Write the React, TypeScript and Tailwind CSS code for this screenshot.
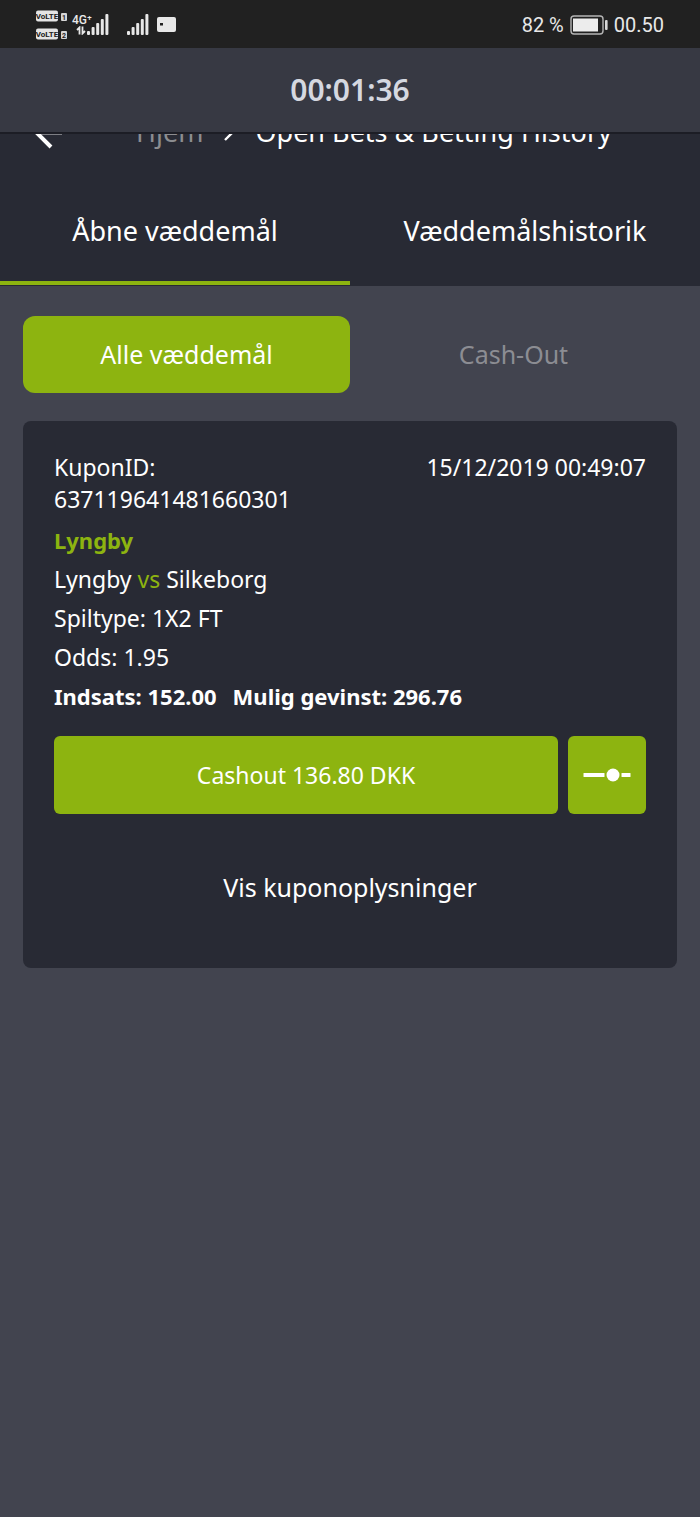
interface Bet {
  id: string;
  placedAt: string;
  selection: string;
  home: string;
  away: string;
  market: string;
  odds: number;
  stake: number;
  potentialWin: number;
  cashout: number;
}

const bets: Bet[] = [
  {
    id: "637119641481660301",
    placedAt: "15/12/2019 00:49:07",
    selection: "Lyngby",
    home: "Lyngby",
    away: "Silkeborg",
    market: "1X2 FT",
    odds: 1.95,
    stake: 152,
    potentialWin: 296.76,
    cashout: 136.8,
  },
];

function VolteBadge({ sim }: { sim: number }) {
  return (
    <svg width="32" height="12" viewBox="0 0 32 12" aria-hidden="true">
      <rect x="0" y="0.5" width="22" height="11" rx="2" fill="#e4e4e4" />
      <text
        x="11"
        y="9.2"
        textAnchor="middle"
        fontSize="8"
        fontWeight="700"
        fontFamily="Roboto, sans-serif"
        fill="#212121"
      >
        VoLTE
      </text>
      <rect x="25" y="3" width="6" height="8" rx="1" fill="#d6d6d6" />
      <text
        x="28"
        y="9.6"
        textAnchor="middle"
        fontSize="7"
        fontWeight="700"
        fontFamily="Roboto, sans-serif"
        fill="#212121"
      >
        {sim}
      </text>
    </svg>
  );
}

function SignalBars() {
  return (
    <svg width="22" height="21" viewBox="0 0 22 21" fill="#e8e8e8" aria-hidden="true">
      <rect x="0" y="17" width="3" height="4" rx="1" />
      <rect x="4.6" y="13" width="3" height="8" rx="1" />
      <rect x="9.2" y="9" width="3" height="12" rx="1" />
      <rect x="13.8" y="5" width="3" height="16" rx="1" />
      <rect x="18.4" y="0" width="3" height="21" rx="1" />
    </svg>
  );
}

function StatusBar() {
  return (
    <div className="flex h-12 items-center justify-between bg-[#212121] px-9 pt-px font-[Roboto,sans-serif] text-[#e8e8e8]">
      <div className="flex items-center">
        <div className="flex flex-col gap-[6px]">
          <VolteBadge sim={1} />
          <VolteBadge sim={2} />
        </div>
        <div className="ml-1 flex w-[18px] flex-col">
          <span className="text-[12px] leading-3 font-medium whitespace-nowrap">4G⁺</span>
          <svg width="10" height="9" viewBox="0 0 10 9" className="ml-1" aria-hidden="true">
            <path
              d="M3.5 8.5V1.5L1 4M6.5 0.5v7L9 5"
              fill="none"
              stroke="#e8e8e8"
              strokeWidth="1.8"
            />
          </svg>
        </div>
        <div className="-ml-[3px]">
          <SignalBars />
        </div>
        <div className="ml-[18px]">
          <SignalBars />
        </div>
        <svg width="19" height="15" viewBox="0 0 19 15" className="ml-2" aria-hidden="true">
          <rect width="19" height="15" rx="2" fill="#e8e8e8" />
          <rect x="3" y="6" width="3" height="2.5" fill="#212121" />
        </svg>
      </div>
      <div className="flex items-center gap-[6px] text-[20px] leading-6">
        <span>82 %</span>
        <svg width="38" height="20" viewBox="0 0 38 20" aria-hidden="true">
          <rect
            x="1"
            y="1"
            width="32"
            height="18"
            rx="3"
            fill="none"
            stroke="#b5b5b5"
            strokeWidth="1.4"
          />
          <rect x="3" y="3.5" width="25" height="13" fill="#ececec" />
          <rect x="35" y="5" width="2.6" height="10" rx="1" fill="#d8d8d8" />
        </svg>
        <span>00.50</span>
      </div>
    </div>
  );
}

// The row is scrolled half way under the timer bar
function Breadcrumb() {
  return (
    <nav className="flex h-[43px] items-end overflow-hidden" aria-label="Breadcrumb">
      <div className="flex h-[90px] w-full shrink-0 items-center pl-[34px] text-[27px]">
        <a href="#back" aria-label="Tilbage">
          <svg width="30" height="34" viewBox="0 0 30 34" fill="none" stroke="#fff">
            <path d="M17 2.5 2.500 17.500 17 32" strokeWidth="4" />
            <path d="M3 18h25" strokeWidth="2.8" />
          </svg>
        </a>
        <a href="#hjem" className="ml-[72px] text-[#8c8d90]">
          Hjem
        </a>
        <svg width="12" height="18" viewBox="0 0 12 18" className="ml-5" aria-hidden="true">
          <path d="m2 1 8 8-8 8" fill="none" stroke="#fff" strokeWidth="2.4" />
        </svg>
        <span className="ml-5 whitespace-nowrap">Open Bets &amp; Betting History</span>
      </div>
    </nav>
  );
}

function BetCard({ bet }: { bet: Bet }) {
  return (
    <article className="mt-7 rounded-lg bg-[#282a34] px-[31px] pt-[30px] pb-[42px]">
      <div className="flex justify-between gap-4 leading-8">
        <p className="min-w-0 flex-1">
          KuponID:
          <br />
          {bet.id}
        </p>
        <time className="shrink-0">{bet.placedAt}</time>
      </div>
      <div className="mt-[6px] leading-[39px]">
        <p className="text-[22px] font-bold text-[#8db410]">{bet.selection}</p>
        <p>
          {bet.home} <span className="text-[#8db410]">vs</span> {bet.away}
        </p>
        <p>Spiltype: {bet.market}</p>
        <p>Odds: {bet.odds}</p>
        <p className="flex flex-wrap gap-x-4 text-[22px] font-bold">
          <span>Indsats: {bet.stake.toFixed(2)}</span>
          <span>Mulig gevinst: {bet.potentialWin.toFixed(2)}</span>
        </p>
      </div>
      <div className="mt-5 flex gap-[10px]">
        <button type="button" className="h-[78px] flex-1 rounded-md bg-[#8db410]">
          Cashout {bet.cashout.toFixed(2)} DKK
        </button>
        <button
          type="button"
          aria-label="Delvis cashout"
          className="flex size-[78px] items-center justify-center rounded-md bg-[#8db410]"
        >
          <svg width="48" height="14" viewBox="0 0 48 14" fill="#fff" aria-hidden="true">
            <rect x="0.5" y="5" width="21" height="4" rx="0.5" />
            <circle cx="30" cy="7" r="6.5" />
            <rect x="38.5" y="5" width="9" height="4" rx="0.5" />
          </svg>
        </button>
      </div>
      <button type="button" className="mt-9 h-[76px] w-full text-[25px]">
        Vis kuponoplysninger
      </button>
    </article>
  );
}

export default function App() {
  return (
    <div className="min-h-screen bg-[#42444f] font-['Noto_Sans',sans-serif] text-[23px] text-white">
      <StatusBar />
      <header className="flex h-[86px] items-center justify-center border-b-2 border-[#1c1d25] bg-[#373943]">
        <span className="text-[30px] leading-8 font-semibold text-[#d5d8e0]">00:01:36</span>
      </header>

      <div className="bg-[#282a34] pb-px">
        <Breadcrumb />
        <div className="grid h-[108px] grid-cols-2 text-[27px]" role="tablist">
          <button
            type="button"
            role="tab"
            aria-selected="true"
            className="border-b-4 border-[#8db410] pt-1"
          >
            Åbne væddemål
          </button>
          <button
            type="button"
            role="tab"
            aria-selected="false"
            className="border-b-4 border-transparent pt-1"
          >
            Væddemålshistorik
          </button>
        </div>
      </div>

      <main className="px-[23px] pt-[30px] pb-8">
        <div className="grid grid-cols-2 text-[25px]">
          <button type="button" className="h-[77px] rounded-xl bg-[#8db410]">
            Alle væddemål
          </button>
          <button type="button" className="h-[77px] rounded-xl text-[#8c8d93]">
            Cash-Out
          </button>
        </div>
        {bets.map((bet) => (
          <BetCard key={bet.id} bet={bet} />
        ))}
      </main>
    </div>
  );
}
